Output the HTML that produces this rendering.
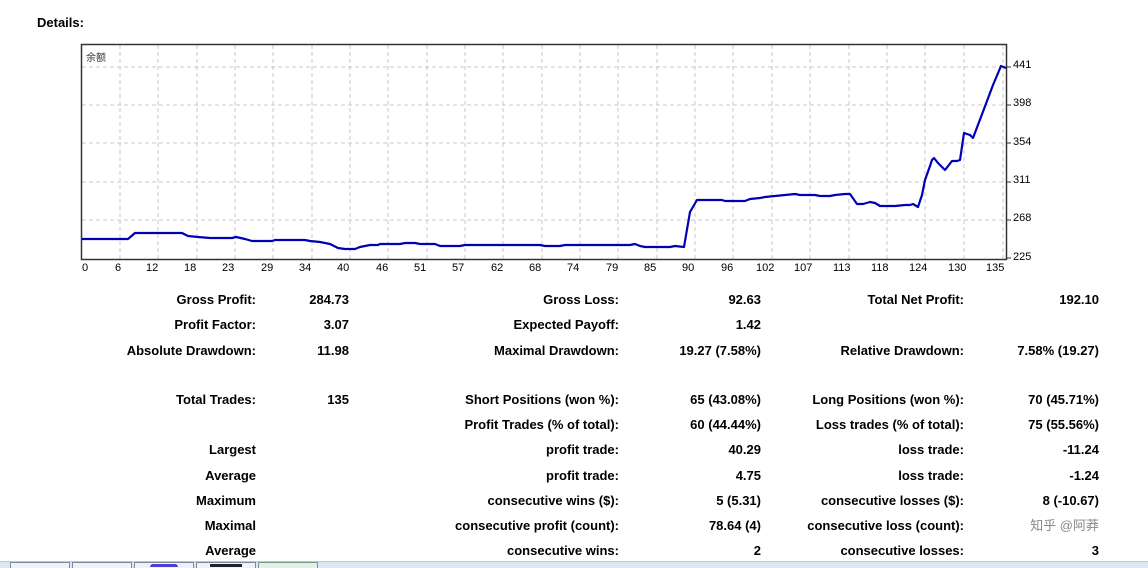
<!DOCTYPE html>
<html><head><meta charset="utf-8"><style>
body{margin:0;width:1148px;height:567px;background:#fff;position:relative;overflow:hidden;font-family:Tahoma,"Liberation Sans","Noto Sans CJK SC",sans-serif;font-weight:bold;font-size:13px;color:#000}
.t{position:absolute;white-space:nowrap;text-align:right;line-height:16px}
.ax{position:absolute;font-weight:normal;font-size:11px;font-family:"Liberation Sans",sans-serif;color:#000}
</style></head><body>
<div class="t" style="left:37px;top:15px;text-align:left">Details:</div>
<svg style="position:absolute;left:0;top:0" width="1148" height="290">
<g stroke="#c8c8c8" stroke-dasharray="4,3" stroke-width="1">
<line x1="82" y1="67" x2="1006" y2="67"/><line x1="82" y1="105" x2="1006" y2="105"/><line x1="82" y1="143" x2="1006" y2="143"/><line x1="82" y1="182" x2="1006" y2="182"/><line x1="82" y1="220" x2="1006" y2="220"/>
<line x1="120" y1="45" x2="120" y2="259"/><line x1="158" y1="45" x2="158" y2="259"/><line x1="197" y1="45" x2="197" y2="259"/><line x1="235" y1="45" x2="235" y2="259"/><line x1="273" y1="45" x2="273" y2="259"/><line x1="312" y1="45" x2="312" y2="259"/><line x1="350" y1="45" x2="350" y2="259"/><line x1="388" y1="45" x2="388" y2="259"/><line x1="427" y1="45" x2="427" y2="259"/><line x1="465" y1="45" x2="465" y2="259"/><line x1="503" y1="45" x2="503" y2="259"/><line x1="542" y1="45" x2="542" y2="259"/><line x1="580" y1="45" x2="580" y2="259"/><line x1="618" y1="45" x2="618" y2="259"/><line x1="657" y1="45" x2="657" y2="259"/><line x1="695" y1="45" x2="695" y2="259"/><line x1="733" y1="45" x2="733" y2="259"/><line x1="772" y1="45" x2="772" y2="259"/><line x1="810" y1="45" x2="810" y2="259"/><line x1="849" y1="45" x2="849" y2="259"/><line x1="887" y1="45" x2="887" y2="259"/><line x1="925" y1="45" x2="925" y2="259"/><line x1="964" y1="45" x2="964" y2="259"/><line x1="1003" y1="45" x2="1003" y2="259"/>
</g>
<rect x="81.5" y="44.5" width="925" height="215" fill="none" stroke="#333" stroke-width="1.5"/>
<g stroke="#333"><line x1="1007" y1="67" x2="1011" y2="67"/><line x1="1007" y1="105" x2="1011" y2="105"/><line x1="1007" y1="143" x2="1011" y2="143"/><line x1="1007" y1="182" x2="1011" y2="182"/><line x1="1007" y1="220" x2="1011" y2="220"/><line x1="1007" y1="258" x2="1011" y2="258"/></g>
<polyline fill="none" stroke="#0000b4" stroke-width="2.2" stroke-linejoin="round" points="82,239 128,239 135,233 182,233 188,236 198,237 210,238 232,238 236,237 245,239 252,241 272,241 275,240 305,240 310,241 320,242 330,244 338,248 345,249 355,249 360,247 370,245 378,245 380,244 400,244 405,243 415,243 420,244 435,244 440,246 460,246 465,245 540,245 545,246 560,246 565,245 630,245 635,244 640,246 645,247 670,247 675,246 684,247 690,212 697,200 722,200 725,201 745,201 750,199 760,198 765,197 775,196 785,195 795,194 800,195 815,195 820,196 830,196 835,195 845,194 850,194 857,204 863,204 870,202 875,203 880,206 895,206 905,205 910,205 913,204 918,207 922,195 925,180 930,166 932,160 934,158 938,163 942,167 945,170 952,161 957,161 960,160 964,133 970,135 973,138 984,109 993,85 1001,66 1006,68"/>
</svg>
<div class="ax" style="left:86px;top:49px;font-family:'Noto Sans CJK SC',sans-serif;font-size:10px;color:#333">余额</div>
<div class="ax" style="left:1013px;top:59px">441</div>
<div class="ax" style="left:1013px;top:97px">398</div>
<div class="ax" style="left:1013px;top:136px">354</div>
<div class="ax" style="left:1013px;top:174px">311</div>
<div class="ax" style="left:1013px;top:212px">268</div>
<div class="ax" style="left:1013px;top:251px">225</div>
<div style="position:absolute;left:0;top:262px">
<span class="ax" style="left:82px">0</span><span class="ax" style="left:115px">6</span><span class="ax" style="left:146px">12</span><span class="ax" style="left:184px">18</span><span class="ax" style="left:222px">23</span><span class="ax" style="left:261px">29</span><span class="ax" style="left:299px">34</span><span class="ax" style="left:337px">40</span><span class="ax" style="left:376px">46</span><span class="ax" style="left:414px">51</span><span class="ax" style="left:452px">57</span><span class="ax" style="left:491px">62</span><span class="ax" style="left:529px">68</span><span class="ax" style="left:567px">74</span><span class="ax" style="left:606px">79</span><span class="ax" style="left:644px">85</span><span class="ax" style="left:682px">90</span><span class="ax" style="left:721px">96</span><span class="ax" style="left:756px">102</span><span class="ax" style="left:794px">107</span><span class="ax" style="left:833px">113</span><span class="ax" style="left:871px">118</span><span class="ax" style="left:909px">124</span><span class="ax" style="left:948px">130</span><span class="ax" style="left:986px">135</span>
</div>

<div class="t" style="right:892px;top:292px">Gross Profit:</div><div class="t" style="right:799px;top:292px">284.73</div>
<div class="t" style="right:892px;top:317px">Profit Factor:</div><div class="t" style="right:799px;top:317px">3.07</div>
<div class="t" style="right:892px;top:343px">Absolute Drawdown:</div><div class="t" style="right:799px;top:343px">11.98</div>
<div class="t" style="right:892px;top:392px">Total Trades:</div><div class="t" style="right:799px;top:392px">135</div>
<div class="t" style="right:892px;top:442px">Largest</div>
<div class="t" style="right:892px;top:468px">Average</div>
<div class="t" style="right:892px;top:493px">Maximum</div>
<div class="t" style="right:892px;top:518px">Maximal</div>
<div class="t" style="right:892px;top:543px">Average</div>

<div class="t" style="right:529px;top:292px">Gross Loss:</div><div class="t" style="right:387px;top:292px">92.63</div>
<div class="t" style="right:529px;top:317px">Expected Payoff:</div><div class="t" style="right:387px;top:317px">1.42</div>
<div class="t" style="right:529px;top:343px">Maximal Drawdown:</div><div class="t" style="right:387px;top:343px">19.27 (7.58%)</div>
<div class="t" style="right:529px;top:392px">Short Positions (won %):</div><div class="t" style="right:387px;top:392px">65 (43.08%)</div>
<div class="t" style="right:529px;top:417px">Profit Trades (% of total):</div><div class="t" style="right:387px;top:417px">60 (44.44%)</div>
<div class="t" style="right:529px;top:442px">profit trade:</div><div class="t" style="right:387px;top:442px">40.29</div>
<div class="t" style="right:529px;top:468px">profit trade:</div><div class="t" style="right:387px;top:468px">4.75</div>
<div class="t" style="right:529px;top:493px">consecutive wins ($):</div><div class="t" style="right:387px;top:493px">5 (5.31)</div>
<div class="t" style="right:529px;top:518px">consecutive profit (count):</div><div class="t" style="right:387px;top:518px">78.64 (4)</div>
<div class="t" style="right:529px;top:543px">consecutive wins:</div><div class="t" style="right:387px;top:543px">2</div>

<div class="t" style="right:184px;top:292px">Total Net Profit:</div><div class="t" style="right:49px;top:292px">192.10</div>
<div class="t" style="right:184px;top:343px">Relative Drawdown:</div><div class="t" style="right:49px;top:343px">7.58% (19.27)</div>
<div class="t" style="right:184px;top:392px">Long Positions (won %):</div><div class="t" style="right:49px;top:392px">70 (45.71%)</div>
<div class="t" style="right:184px;top:417px">Loss trades (% of total):</div><div class="t" style="right:49px;top:417px">75 (55.56%)</div>
<div class="t" style="right:184px;top:442px">loss trade:</div><div class="t" style="right:49px;top:442px">-11.24</div>
<div class="t" style="right:184px;top:468px">loss trade:</div><div class="t" style="right:49px;top:468px">-1.24</div>
<div class="t" style="right:184px;top:493px">consecutive losses ($):</div><div class="t" style="right:49px;top:493px">8 (-10.67)</div>
<div class="t" style="right:184px;top:518px">consecutive loss (count):</div><div class="t" style="right:49px;top:518px;color:#888;font-weight:normal">知乎 @阿莽</div>
<div class="t" style="right:184px;top:543px">consecutive losses:</div><div class="t" style="right:49px;top:543px">3</div>

<div style="position:absolute;left:0;top:561px;width:1148px;height:6px;background:#dbe7f3;border-top:1px solid #b8c8d8"></div>
<div style="position:absolute;left:10px;top:562px;width:58px;height:5px;background:#eef3f9;border:1px solid #7a8a9a;border-bottom:0"></div>
<div style="position:absolute;left:72px;top:562px;width:58px;height:5px;background:#eef3f9;border:1px solid #7a8a9a;border-bottom:0"></div>
<div style="position:absolute;left:134px;top:562px;width:58px;height:5px;background:#eef3f9;border:1px solid #7a8a9a;border-bottom:0"></div>
<div style="position:absolute;left:150px;top:564px;width:28px;height:3px;background:#4a3ee0;border-radius:3px 3px 0 0"></div>
<div style="position:absolute;left:196px;top:562px;width:58px;height:5px;background:#eef3f9;border:1px solid #7a8a9a;border-bottom:0"></div>
<div style="position:absolute;left:210px;top:564px;width:32px;height:3px;background:#223"></div>
<div style="position:absolute;left:258px;top:562px;width:58px;height:5px;background:#e0f0e6;border:1px solid #7a9a8a;border-bottom:0"></div>
</body></html>
